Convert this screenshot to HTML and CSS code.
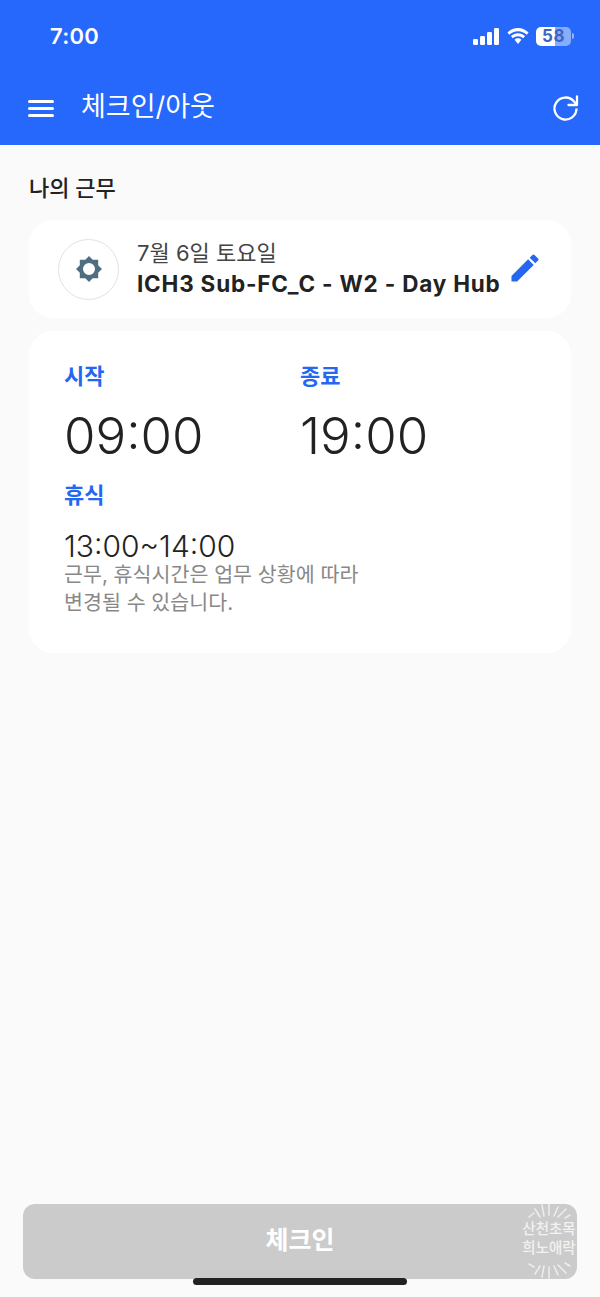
FILE: index.html
```html
<!DOCTYPE html>
<html lang="ko">
<head>
<meta charset="utf-8">
<title>체크인/아웃</title>
<link rel="stylesheet" href="styles.css">
</head>
<body>
<div class="page">
  <header class="top">
    <div class="status">
      <span class="clock">7:00</span>
      <div class="status-icons">
        <svg class="signal" width="27" height="17" viewBox="0 0 27 17"><rect x="0" y="11" width="5" height="6" rx="1.3"/><rect x="7" y="8" width="5" height="9" rx="1.3"/><rect x="14" y="4" width="5" height="13" rx="1.3"/><rect x="21" y="0" width="5" height="17" rx="1.3"/></svg>
        <svg class="wifi" width="24" height="17" viewBox="0 0 24 17"><path d="M12 3.2c3.4 0 6.400 1.300 8.700 3.500l1.900-2.100C19.800 1.800 16.100 0 12 0S4.200 1.800 1.400 4.600l1.900 2.100C5.600 4.500 8.600 3.200 12 3.200z"/><path d="M12 8.200c2 0 3.800.8 5.200 2l1.900-2.100C17.200 6.300 14.700 5.200 12 5.200S6.800 6.300 4.900 8.100l1.900 2.100c1.400-1.200 3.200-2 5.200-2z"/><path d="M12 10.300c-1.300 0-2.500.5-3.400 1.400L12 16l3.400-4.300c-.9-.9-2.100-1.400-3.400-1.400z"/></svg>
        <div class="battery">
          <div class="battery-body"><span class="battery-level">58</span></div>
          <span class="battery-tip"></span>
        </div>
      </div>
    </div>
    <div class="appbar">
      <div class="appbar-title">
        <svg class="menu" width="26" height="18" viewBox="0 0 26 18"><rect y="0" width="26" height="3" rx="1.500"/><rect y="7" width="26" height="3" rx="1.500"/><rect y="14" width="26" height="3" rx="1.500"/></svg>
        <h1>체크인/아웃</h1>
      </div>
      <svg class="refresh" width="28" height="28" viewBox="0 0 28 28" fill="none"><path d="M25.500 13.500A11 11 0 1 1 22.800 6.300L26 10" stroke="#fff" stroke-width="2.300"/><path d="M26 1.500V10H17.500" stroke="#fff" stroke-width="2.300" stroke-linecap="round" stroke-linejoin="round"/></svg>
    </div>
  </header>

  <main class="content">
    <h2 class="section-title">나의 근무</h2>

    <section class="card shift">
      <div class="shift-icon">
        <svg width="28" height="28" viewBox="0 0 28 28"><path fill="#4f6f80" fill-rule="evenodd" d="M14 1l3.700 3.700 5.500 0 0 5.500L27 14l-3.800 3.800 0 5.400-5.500 0L14 27l-3.700-3.800-5.500 0 0-5.400L1 14l3.800-3.800 0-5.500 5.500 0zM14 8a6 6 0 1 0 0 12 6 6 0 0 0 0-12z"/></svg>
      </div>
      <div class="shift-text">
        <div class="shift-date">7월 6일 토요일</div>
        <div class="shift-name">ICH3 Sub-FC_C - W2 - Day Hub</div>
      </div>
      <svg class="edit" width="36" height="36" viewBox="0 0 24 24"><path fill="#2468f2" d="M3 17.250V21h3.750L17.810 9.940l-3.750-3.750L3 17.250zM20.710 7.040a1 1 0 0 0 0-1.410l-2.340-2.340a1 1 0 0 0-1.410 0l-1.830 1.830 3.750 3.750 1.830-1.830z"/></svg>
    </section>

    <section class="card times">
      <div class="time-row">
        <div class="time-col">
          <div class="label">시작</div>
          <div class="time-big">09:00</div>
        </div>
        <div class="time-col">
          <div class="label">종료</div>
          <div class="time-big">19:00</div>
        </div>
      </div>
      <div class="label">휴식</div>
      <div class="time-small">13:00~14:00</div>
      <p class="note">근무, 휴식시간은 업무 상황에 따라<br>변경될 수 있습니다.</p>
    </section>
  </main>

  <footer class="bottom">
    <button class="checkin" type="button">체크인</button>
    <div class="stamp">
      <svg class="rays" width="56" height="75" viewBox="0 0 56 75"><g stroke="#f2f2f2" stroke-width="1.500" stroke-linecap="round" opacity="0.9"><path d="M8 13l5-4M14 5l5 8M21 1l2 11M28 0v11M37 3l-4 9M45 5l-8 8M49 11l-5 3"/><path d="M8 60l5 3M14 70l5-8M21 73l2-11M28 74V63M37 71l-4-9M45 69l-8-8M49 62l-5-3"/></g></svg>
      <span>산천초목</span>
      <span>희노애락</span>
    </div>
    <div class="home-bar"></div>
  </footer>
</div>
</body>
</html>
```
FILE: styles.css
```css
* { box-sizing: border-box; }

html, body {
  margin: 0;
  padding: 0;
}

body {
  font-family: Inter, "Noto Sans CJK KR", sans-serif;
  color: #222;
  background: #fafafa;
}

.page {
  width: 600px;
  height: 1297px;
  display: flex;
  flex-direction: column;
  overflow: hidden;
}

/* Blue header: status bar and app bar */
.top {
  height: 145px;
  flex: none;
  background: #2568fb;
  color: #fff;
}

.status {
  height: 72px;
  padding: 0 26px 0 50px;
  display: flex;
  align-items: center;
  justify-content: space-between;
}

.clock {
  font-size: 22px;
  font-weight: 600;
  letter-spacing: 0.3px;
}

.status-icons {
  display: flex;
  align-items: center;
  gap: 6px;
}

.signal, .wifi, .menu { fill: #fff; }

.battery {
  display: flex;
  align-items: center;
  gap: 1px;
}

.battery-body {
  width: 35px;
  height: 19px;
  border-radius: 5px;
  background: linear-gradient(90deg, #fff 55%, rgba(255, 255, 255, 0.45) 55%);
  display: flex;
  align-items: center;
  justify-content: center;
}

.battery-level {
  font-size: 17px;
  font-weight: 700;
  letter-spacing: 0.5px;
  color: #3a64c6;
}

.battery-tip {
  width: 2px;
  height: 6px;
  border-radius: 0 2px 2px 0;
  background: rgba(255, 255, 255, 0.5);
}

.appbar {
  height: 73px;
  padding: 0 21px 0 28px;
  display: flex;
  align-items: center;
  justify-content: space-between;
}

.appbar-title {
  display: flex;
  align-items: center;
  gap: 27px;
}

.appbar-title h1 {
  margin: 0 0 4px;
  font-size: 27px;
  font-weight: 400;
  line-height: 36px;
}

/* Main content */
.content {
  flex: 1;
  padding: 29px 29px 0;
}

.section-title {
  margin: 0 0 18px;
  font-size: 22px;
  line-height: 28px;
  font-weight: 500;
  color: #222;
}

.card {
  background: #fff;
  border-radius: 24px;
}

.shift {
  height: 98px;
  padding: 0 28px 0 29px;
  display: flex;
  align-items: center;
  margin-bottom: 13px;
}

.shift-icon {
  width: 61px;
  height: 61px;
  flex: none;
  border: 1px solid #e2e2e2;
  border-radius: 50%;
  display: flex;
  align-items: center;
  justify-content: center;
  margin-right: 18px;
}

.shift-text {
  flex: 1;
  min-width: 0;
}

.shift-date {
  font-size: 22px;
  line-height: 30px;
  color: #444;
}

.shift-name {
  font-size: 22.500px;
  line-height: 32px;
  font-weight: 700;
  letter-spacing: 0.8px;
  white-space: nowrap;
}

.edit {
  flex: none;
  margin-bottom: 2px;
}

.times {
  height: 322px;
  padding: 29px 35px 0;
}

.time-row { display: flex; }

.time-col { width: 236px; }

.label {
  font-size: 22px;
  line-height: 32px;
  font-weight: 600;
  color: #2468f2;
}

.time-big {
  margin: 14px 0 13px;
  font-size: 51px;
  line-height: 60px;
  font-weight: 350;
  color: #222;
}

.time-small {
  margin-top: 20px;
  font-size: 30px;
  line-height: 30px;
  font-weight: 350;
  color: #222;
}

.note {
  margin: 0;
  font-size: 20.600px;
  line-height: 28px;
  color: #888;
}

/* Bottom action area */
.bottom {
  position: relative;
  height: 93px;
  flex: none;
  padding: 0 23px;
}

.checkin {
  display: block;
  width: 100%;
  height: 75px;
  padding: 0 0 7px;
  border: 0;
  border-radius: 12px;
  background: #cbcbcb;
  color: #fff;
  font-family: inherit;
  font-size: 25px;
  font-weight: 700;
}

.stamp {
  position: absolute;
  right: 23px;
  top: 0;
  width: 56px;
  height: 75px;
  padding-bottom: 6px;
  display: flex;
  flex-direction: column;
  align-items: center;
  justify-content: center;
  font-size: 14.500px;
  line-height: 18.500px;
  font-weight: 500;
  color: #f2f2f2;
  white-space: nowrap;
}

.rays {
  position: absolute;
  left: 0;
  top: 0;
}

.home-bar {
  position: absolute;
  left: 193px;
  top: 74px;
  width: 214px;
  height: 7px;
  border-radius: 4px;
  background: #222;
}
```
